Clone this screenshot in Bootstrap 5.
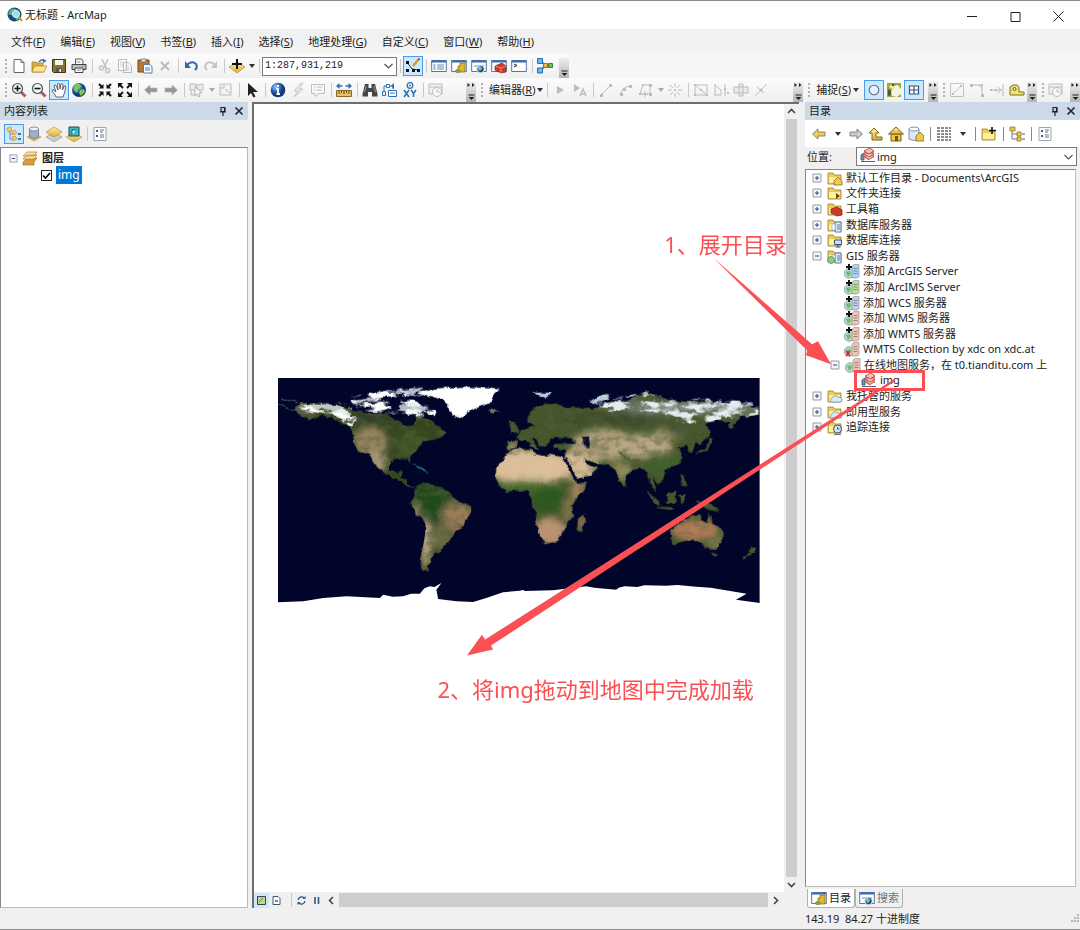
<!DOCTYPE html>
<html lang="zh-CN">
<head>
<meta charset="utf-8">
<meta name="viewport" content="width=device-width, initial-scale=1">
<title>无标题 - ArcMap</title>
<link href="https://cdn.jsdelivr.net/npm/bootstrap@5.3.0/dist/css/bootstrap.min.css" rel="stylesheet">
<style>
body{font-family:"Noto Sans","Noto Sans CJK SC",sans-serif;font-size:11px;line-height:16px;color:#222;background:#f0f0f0}
button{font:inherit;color:inherit;background:none;border:0;padding:0}
.app{min-height:100vh;border-top:1px solid #8c8c8c;border-bottom:1px solid #8c8c8c}
.titlebar{height:28px;background:#fff;padding-left:7px;gap:2px}
.winbtn{width:43px;height:28px}
.menubar{height:25px;background:linear-gradient(#f0f0f0,#f4f4f4);gap:15px;padding-left:11px}
.menubar a{color:#222;text-decoration:none}
.toolrow{height:24px;background:#f6f6f6}
.toolbar{height:24px;background:linear-gradient(#fcfcfc,#f0f0f0)}
.tb{flex:none;width:20px;height:20px;display:flex;align-items:center;justify-content:center}
.tb svg,.ic{width:16px;height:16px;flex:none;display:block}
.tb.on{background:#cce8ff;border:1px solid #4a9be8}
.tb.off svg{filter:grayscale(1);opacity:.45}
.grip{flex:none;width:4px;height:14px;background:radial-gradient(circle at 1px 1px,#b4b4b4 1px,transparent 1px) 0 0/4px 4px;margin-left:5px}
.sep{flex:none;width:6px;height:14px;background:linear-gradient(#c8c8c8,#c8c8c8) center/1px 100% no-repeat}
.catalog .sep{width:8px;background-image:linear-gradient(#888,#888)}
.dd{flex:none;width:9px;height:20px;display:flex;align-items:center;justify-content:center}
.dd::before{content:"";border:3px solid transparent;border-top:4px solid #333;border-bottom:0}
.dd.off::before{border-top-color:#aaa}
.more{flex:none;width:10px;height:20px;align-self:flex-end;background:linear-gradient(#eee,#b4b4b4);display:flex;align-items:flex-end}
.more svg{width:10px;height:20px}
.combo{appearance:none;border:1px solid #7a7a7a;border-radius:0;background:#fff;color:#222;height:19px;padding:0 16px 0 2px}
.combo.loc{padding-left:20px}
.scale-box{width:135px;font:10px/16px "Liberation Mono",monospace}
.comboarrow{position:absolute;right:4px;top:50%;width:9px;height:6px;margin-top:-3px;pointer-events:none}
.workarea{gap:4px}
.toc{width:248px}
.catalog{width:275px}
.panehead{height:18px;background:#cbd9e8;padding:0 3px 0 4px}
.panetools{height:27px}
.locrow{padding:0 3px 3px 2px}
.sunk{background:#fff;border:1px solid #828790;border-right-color:#bbb;border-bottom-color:#bbb}
.toc .sunk{padding-top:2px}
.sel{background:#0078d7;color:#fff;font-size:12px;line-height:18px;padding:0 2px}
.toc input{width:11px;height:11px;margin:0;appearance:none;border:1px solid #222;background:#fff url("data:image/svg+xml,%3Csvg xmlns='http://www.w3.org/2000/svg' viewBox='0 0 9 9'%3E%3Cpath d='M1 4.5 3.5 7 8 2' fill='none' stroke='%23000' stroke-width='1.6'/%3E%3C/svg%3E")}
.mapframe{border-left:2px solid #6e6e6e;border-top:2px solid #6e6e6e;min-width:0;margin-right:2px}
.mapview{background:#fff;min-width:0}
.world{width:91%}
.vscroll{width:15px;background:#f0f0f0}
.hscroll{height:16px}
.hscroll .thumb{height:14px}
.datav{background:#cce8ff}
.thumb{background:#cdcdcd}
.arrowbtn{width:15px;height:15px;display:flex;align-items:center;justify-content:center}
.arrowbtn svg{width:9px;height:9px}
.tree{list-style:none;margin:0;padding:0;height:265px;display:grid;grid-auto-rows:1fr}
.tree li{display:flex;align-items:center;white-space:nowrap;gap:3px;padding-left:6px;min-height:0}
.tree li>svg:first-child{width:10px;height:10px;margin-right:2px;flex:none}
.tree .d2{padding-left:38px}
.tree .d2x{padding-left:24px}
.tree .d3{padding-left:55px}
.pick{position:relative}
.pick::after{content:"";position:absolute;left:48px;width:71px;top:-3px;bottom:-3px;border:3px solid #fb4f54}
.tab{height:19px;border:1px solid #b0b0b0;border-top:0;border-radius:0 0 3px 3px;padding:0 3px;gap:2px}
.tab.act{background:#fff}
.tabs{padding:2px 0 0 2px}
.status{height:21px}
.marks{position:absolute;inset:0;width:100%;height:100%;pointer-events:none}
.note{position:absolute;color:#fb4f54;font-size:22px;line-height:30px;white-space:nowrap;pointer-events:none}
.note1{left:61.5%;top:24.6%}
.note2{left:40.5%;top:72.5%}
</style>
</head>
<body>
<svg class="position-absolute" width="0" height="0" aria-hidden="true">
<defs>
<linearGradient id="gy" x2="0" y2="1"><stop stop-color="#fff0a0"/><stop offset="1" stop-color="#dcae35"/></linearGradient>
<radialGradient id="gb" cx=".35" cy=".3"><stop stop-color="#9fd4ff"/><stop offset=".6" stop-color="#2b6cc4"/><stop offset="1" stop-color="#14397a"/></radialGradient>
</defs>
<symbol id="app" viewBox="0 0 16 16"><circle cx="7.5" cy="7.5" r="7" fill="#174f70"/><path d="M3 3q4-3 7 0l-2 4-4 1-3-1zM8 10l4-2 1 2-3 4z" fill="#5bb58b"/><circle cx="9" cy="7" r="3.6" fill="#9bdcee" stroke="#d9f2fa"/><path d="M11.5 10l3.5 4" stroke="#c79a35" stroke-width="2"/></symbol>
<symbol id="new" viewBox="0 0 16 16"><path d="M3 1.5h7l3 3v10H3z" fill="#fff" stroke="#666"/><path d="M10 1.5v3h3" fill="#ddd" stroke="#666"/></symbol>
<symbol id="open" viewBox="0 0 16 16"><path d="M1 4h4l1 1h6v9H1z" fill="#d8ae3c" stroke="#9b7824" stroke-width=".7"/><path d="M3.500 8H16l-3 6H1z" fill="#ffe58a" stroke="#a88328" stroke-width=".7"/><path d="M8 4q2-3 5-1.500" fill="none" stroke="#2a6cb5" stroke-width="1.300"/><path d="M12 .5l3.500 2.500-3.500 2z" fill="#2a6cb5"/></symbol>
<symbol id="save" viewBox="0 0 16 16"><path d="M1.500 1.500h13v13h-12l-1-1z" fill="#8c7428" stroke="#3c351f"/><path d="M4 2h8v5H4z" fill="#f4f4f4"/><path d="M5 10h6v4H5z" fill="#555"/><path d="M8.500 11h1.500v3H8.500z" fill="#fff"/></symbol>
<symbol id="print" viewBox="0 0 16 16"><path d="M4.500 1h6l1.500 2v4h-7.500z" fill="#fff" stroke="#555"/><path d="M1 6.500h14v5H1z" fill="#bfbfbf" stroke="#444"/><path d="M4 10h8v4.500H4z" fill="#fff" stroke="#444"/><path d="M11 8h2" stroke="#d9a520" stroke-width="1.500"/><path d="M5.500 4h4M6 12h4" stroke="#888"/></symbol>
<symbol id="cut" viewBox="0 0 16 16"><path d="M5 1l4 9M11 1L7 10" stroke="#888" stroke-width="1.600"/><circle cx="4.500" cy="10" r="2" fill="none" stroke="#888" stroke-width="1.500"/><circle cx="10.500" cy="12.500" r="2" fill="none" stroke="#888" stroke-width="1.500"/></symbol>
<symbol id="copy" viewBox="0 0 16 16"><path d="M1.500 1.500h8v11h-8zM6.500 4.500h5l3 3v7h-8z" fill="#fff" stroke="#777"/><path d="M8 8h4M8 10h5M8 12h5M3 4h3M3 6h3M3 8h3" stroke="#888" stroke-width=".8"/></symbol>
<symbol id="paste" viewBox="0 0 16 16"><path d="M1 2h11v12H1z" fill="#b67a30" stroke="#70491a"/><path d="M4 1h5v3H4z" fill="#ddd" stroke="#666" stroke-width=".7"/><path d="M6.500 6.500h6l2.500 2v6.500H6.500z" fill="#fff" stroke="#4a7fb8"/><path d="M8 10h5M8 12h5" stroke="#4a7fb8"/></symbol>
<symbol id="del" viewBox="0 0 16 16"><path d="M4 4l8 8M12 4l-8 8" stroke="#777" stroke-width="2"/></symbol>
<symbol id="undo" viewBox="0 0 16 16"><path d="M4 7q5-5 9-1 2 3-1 6" fill="none" stroke="#3565a8" stroke-width="2"/><path d="M2 3v7h6z" fill="#3565a8"/></symbol>
<symbol id="redo" viewBox="0 0 16 16"><path d="M12 7Q7 2 3 6q-2 3 1 6" fill="none" stroke="#888" stroke-width="2"/><path d="M14 3v7H8z" fill="#888"/></symbol>
<symbol id="addd" viewBox="0 0 16 16"><path d="M0 9l8-5 8 5-8 6z" fill="url(#gy)" stroke="#b58a3a" stroke-width=".7"/><path d="M8 1v10M3 6h10" stroke="#111" stroke-width="2"/></symbol>
<symbol id="edit" viewBox="0 0 16 16"><path d="M2 4l5 7 7 1" fill="none" stroke="#333" stroke-width="1"/><path d="M1 3h3v3H1zM1 11h3v3H1zM7 11h3v3H7zM12 11h3v3h-3z" fill="#111"/><path d="M8 8l5-6" stroke="#d49a26" stroke-width="2.500"/><path d="M13 2l1.500-1.500" stroke="#b33" stroke-width="2"/></symbol>
<symbol id="win" viewBox="0 0 16 16"><path d="M.7 2.500h14.600v11H.7z" fill="#fff" stroke="#56759e"/><path d="M.7 2.500h14.600v2H.7z" fill="#3f6bb0"/></symbol>
<symbol id="toc" viewBox="0 0 16 16"><use href="#win"/><path d="M2.500 7h2M2.500 9h2M2.500 11h2" stroke="#2d69b5" stroke-width="1.200"/><path d="M6 7h7M6 9h7M6 11h7" stroke="#5e8cc0"/></symbol>
<symbol id="cat" viewBox="0 0 16 16"><use href="#win"/><path d="M9 5h5v9H7V8h2z" fill="#e0b82c" stroke="#7a6515" stroke-width=".7"/><ellipse cx="7" cy="13" rx="3" ry="2" fill="#83a34b"/></symbol>
<symbol id="srch" viewBox="0 0 16 16"><use href="#win"/><path d="M3 7h10v2H3z" fill="#aac6e5"/><circle cx="9.500" cy="11" r="3.700" fill="url(#gb)" stroke="#ddd"/><path d="M7 11l3-2 1 2-2 2z" fill="#7bd078"/></symbol>
<symbol id="tbx" viewBox="0 0 16 16"><use href="#win"/><path d="M4 8l7-3 4 3v6l-5 1-6-3z" fill="#cc3a2d" stroke="#7e1c16" stroke-width=".7"/><path d="M4 8l6 2 5-2M10 10v5" stroke="#f28b7c" fill="none"/></symbol>
<symbol id="py" viewBox="0 0 16 16"><use href="#win"/><path d="M3 6l3 1.500L3 9" fill="none" stroke="#222"/></symbol>
<symbol id="model" viewBox="0 0 16 16"><path d="M4 3l4 4h4M4 12l4-4" fill="none" stroke="#333" stroke-width="1.300"/><path d="M.5.500h5v5h-5zM.5 10h5v5h-5z" fill="#6eb5f0" stroke="#2b6fa9"/><path d="M6.500 5.500h4v4h-4z" fill="#f3b04c" stroke="#a86a18"/><path d="M11.500 5.500h4v4h-4z" fill="#67c057" stroke="#39822b"/></symbol>
<symbol id="lens" viewBox="0 0 16 16"><path d="M10 10l4.500 4.500" stroke="#9a665d" stroke-width="3"/><circle cx="6.500" cy="6.500" r="5" fill="#f4f7fa" stroke="#555" stroke-width="1.200"/></symbol>
<symbol id="zin" viewBox="0 0 16 16"><use href="#lens"/><path d="M6.500 3.500v6M3.500 6.500h6" stroke="#111" stroke-width="1.600"/></symbol>
<symbol id="zout" viewBox="0 0 16 16"><use href="#lens"/><path d="M3.500 6.500h6" stroke="#111" stroke-width="1.600"/></symbol>
<symbol id="hand" viewBox="0 0 16 16"><path d="M5 15Q4 12 1 9q0-2 2-1l2 2L3 4q.5-2 2-.5L7 8 6.500 2q1-2 2 0L9 7l1-5q1.500-1 2 .5L11.500 8l1.700-4q1.800-.5 1.500 1-.5 5-2.700 10z" fill="#fff" stroke="#444" stroke-width=".8"/></symbol>
<symbol id="globe" viewBox="0 0 16 16"><circle cx="8" cy="8" r="7" fill="url(#gb)"/><path d="M3 4q3-3 6-2l1 3-3 2-1 4-3-3zM9 8l4-1 1 3-4 4-2-3z" fill="#82c457"/></symbol>
<symbol id="fin" viewBox="0 0 16 16"><path d="M2 2l3 3M14 2l-3 3M2 14l3-3M14 14l-3-3" stroke="#111" stroke-width="2"/><path d="M6.500 2v4.500H2zM9.500 2v4.500H14zM6.500 14V9.500H2zM9.500 14V9.500H14z" fill="#111"/></symbol>
<symbol id="fout" viewBox="0 0 16 16"><path d="M2 2l4 4M14 2l-4 4M2 14l4-4M14 14l-4-4" stroke="#111" stroke-width="1.800"/><path d="M1 1h5L1 6zM15 1h-5l5 5zM1 15h5l-5-5zM15 15h-5l5-5z" fill="#111"/></symbol>
<symbol id="prev" viewBox="0 0 16 16"><path d="M1.500 8L7 3v3h7v4H7v3z" fill="currentColor" stroke="#6d6d6d" stroke-width=".8"/></symbol>
<symbol id="next" viewBox="0 0 16 16"><path d="M14.500 8L9 3v3H2v4h7v3z" fill="currentColor" stroke="#6d6d6d" stroke-width=".8"/></symbol>
<symbol id="selp" viewBox="0 0 16 16"><path d="M1 2h6v6H1zM8 3l6-1v6H8zM2 8v5h5" fill="#ddd" stroke="#777"/><path d="M6 5v9l2-2 2 3 1-1-1-3h3z" fill="#fff" stroke="#666"/></symbol>
<symbol id="clr" viewBox="0 0 16 16"><path d="M2 2h11v11H2z" fill="#eee" stroke="#777"/><path d="M2 6h4V3M7 7l5 4" stroke="#777" fill="none"/></symbol>
<symbol id="ptr" viewBox="0 0 16 16"><path d="M4 1v13l3-3 2.500 4.500 2-1L9 10h5z" fill="#222"/></symbol>
<symbol id="info" viewBox="0 0 16 16"><circle cx="8" cy="8" r="7.300" fill="url(#gb)"/><path d="M8 3v2M6.500 7H8v5M6.500 12h3.500" stroke="#fff" stroke-width="1.800" fill="none"/></symbol>
<symbol id="bolt" viewBox="0 0 16 16"><path d="M11 1L4 9h4l-4 6 9-8H9l4-6z" fill="#ddd" stroke="#777" stroke-width=".8"/></symbol>
<symbol id="pop" viewBox="0 0 16 16"><path d="M1.500 2.500h13v9H9l-4 3v-3H1.500z" fill="#fff" stroke="#777"/><path d="M4 5h1.500M4 8h1.500M7 5h5M7 8h5" stroke="#777"/></symbol>
<symbol id="meas" viewBox="0 0 16 16"><path d="M.5 8.500h15v6H.5z" fill="#eac06b" stroke="#8c662c"/><path d="M3 9v3M5.500 9v2M8 9v3M10.500 9v2M13 9v3" stroke="#64451b"/><path d="M2 4h4.500M9.500 4H14" stroke="#2d6fb8" stroke-width="1.500"/><path d="M0 4l3.500-3v6zM16 4l-3.500-3v6z" fill="#2d6fb8"/></symbol>
<symbol id="bino" viewBox="0 0 16 16"><path d="M3 2h3.500v4h3V2H13l2.500 10v2.500H10V10H6v4.500H.5V12z" fill="#454545"/><path d="M2.500 10L4 4M13.500 10L12 4" stroke="#999"/></symbol>
<symbol id="route" viewBox="0 0 16 16"><path d="M2 10V4h9v3" stroke="#2770b6" fill="none"/><path d="M.5 9.500h3v4h-3zM4.500 2.500h3v3h-3z" fill="#fff" stroke="#2770b6"/><path d="M9 4l3-3v6z" fill="#2770b6"/><path d="M6.500 8.500h8v6h-8z" fill="#fff" stroke="#2770b6"/><path d="M8 11h5" stroke="#2770b6"/></symbol>
<symbol id="xy" viewBox="0 0 16 16"><circle cx="8" cy="3.500" r="2.800" fill="#fff" stroke="#2770b6" stroke-width="1.300"/><circle cx="8" cy="3.500" r="1" fill="#2770b6"/><path d="M2 8l5 7M7 8l-5 7M9 8l2.500 3.500L14 8M11.500 11v4" fill="none" stroke="#2770b6" stroke-width="1.500"/></symbol>
<symbol id="time" viewBox="0 0 16 16"><path d="M1 2h13v10H1zM1 5h13" fill="#eee" stroke="#777"/><circle cx="9" cy="10" r="4.500" fill="#fff" stroke="#777"/><path d="M9 7v3h3" stroke="#777" fill="none"/></symbol>
<symbol id="play" viewBox="0 0 16 16"><path d="M5 4l7 4-7 4z" fill="#777"/></symbol>
<symbol id="playa" viewBox="0 0 16 16"><path d="M2 2l6 4-6 4z" fill="#777"/><path d="M8 14l3-7 3 7M9 12h4" stroke="#777" fill="none" stroke-width="1.300"/></symbol>
<symbol id="ln" viewBox="0 0 16 16"><path d="M3 13L13 3" stroke="#777"/><path d="M2 12h3v3H2zM11 2h3v3h-3z" fill="#777"/></symbol>
<symbol id="arc" viewBox="0 0 16 16"><path d="M3 13Q3 5 12 4" fill="none" stroke="#777"/><path d="M2 11h3v3H2zM5 6h3v3H5zM11 3h3v3h-3z" fill="#777"/></symbol>
<symbol id="trc" viewBox="0 0 16 16"><path d="M2 12L5 3h7v9H2" fill="none" stroke="#777"/><path d="M11 2h3v3h-3zM11 11h3v3h-3zM4 2h2v2H4zM1 11h2v2H1z" fill="#777"/><path d="M7 9v6M4 12h6" stroke="#777"/></symbol>
<symbol id="fillet" viewBox="0 0 16 16"><path d="M2 3h5q6 0 6 6v5M9 3h4v4" fill="none" stroke="#777"/><path d="M1 2h3v3H1zM12 12h3v3h-3zM12 2h2v2h-2z" fill="#777"/></symbol>
<symbol id="extend" viewBox="0 0 16 16"><path d="M1 8h12M14 2v12M9 5l3 3-3 3" fill="none" stroke="#777"/><path d="M1 7h2v2H1zM6 7h2v2H6z" fill="#777"/></symbol>
<symbol id="star" viewBox="0 0 16 16"><path d="M8 1v4M8 11v4M1 8h4M11 8h4M3 3l3 3M13 3l-3 3M3 13l3-3M13 13l-3-3" stroke="#777"/><path d="M7 7h2v2H7z" fill="#777"/></symbol>
<symbol id="ver" viewBox="0 0 16 16"><path d="M2 3v10h12L2 3h12v10" fill="none" stroke="#777"/><path d="M1 2h2v2H1zM1 12h2v2H1zM13 12h2v2h-2zM7 7h2v2H7z" fill="#777"/></symbol>
<symbol id="rsh" viewBox="0 0 16 16"><path d="M2 2v12M2 3l6 5v5H2M12 2v12" fill="none" stroke="#777"/><path d="M11 6h2v2h-2zM14 10h2v2h-2z" fill="#777"/></symbol>
<symbol id="cutp" viewBox="0 0 16 16"><path d="M1 5h14v6H1zM6 2h4v12H6z" fill="#ddd" stroke="#777"/></symbol>
<symbol id="spl" viewBox="0 0 16 16"><path d="M2 14L14 2M4 5l7 6" stroke="#777"/><circle cx="8" cy="8" r="1.500" fill="#777"/></symbol>
<symbol id="circ" viewBox="0 0 16 16"><circle cx="8" cy="8" r="4.800" fill="#e6f3ff" stroke="#51708e" stroke-width="1.100"/></symbol>
<symbol id="snapp" viewBox="0 0 16 16"><path d="M1 1h14v14H1z" fill="#98a648"/><path d="M8 4l4-1 3 4v5l-4 3-5-1-1-4z" fill="#f5f3d9"/><path d="M3 4l4-2 2 2-2 3-3-1z" fill="#f1e68c"/><path d="M2 7l3 2v4l-3 1zM6 2h2v2H6z" fill="#4a5a28"/></symbol>
<symbol id="grid" viewBox="0 0 16 16"><path d="M3.500 4h9v8h-9zM8 4v8M3.500 8h9" fill="#fff" stroke="#355878" stroke-width="1.200"/></symbol>
<symbol id="topo" viewBox="0 0 16 16"><path d="M1.500 1.500h13v13h-13zM4 12l8-8" fill="none" stroke="#888"/><path d="M3 11h2v2H3zM11 3h2v2h-2z" fill="#777"/></symbol>
<symbol id="tape" viewBox="0 0 16 16"><path d="M1 10V5l3-2h4l2 2v5h5v3H1z" fill="#f1e56b" stroke="#74701f"/><circle cx="5.500" cy="7" r="1.500" fill="#fff" stroke="#555"/></symbol>
<symbol id="lsto" viewBox="0 0 16 16"><path d="M4 4v9h5M4 8h5" stroke="#888" fill="none"/><path d="M1 2l4-1 1 4-4 1zM6 6l3-2 2 3-3 2zM6 11l3-1 2 3-4 2z" fill="#f0c76a" stroke="#c08a2e" stroke-width=".6"/><path d="M12 8h3M12 13h3" stroke="#3b77b6" stroke-width="2"/></symbol>
<symbol id="lsts" viewBox="0 0 16 16"><path d="M1 11l7-4 7 4-7 4z" fill="url(#gy)" stroke="#b8862e" stroke-width=".6"/><path d="M3.500 3v8q4.500 3 9 0V3z" fill="#9fb0c4" stroke="#576a82" stroke-width=".7"/><ellipse cx="8" cy="3" rx="4.500" ry="2" fill="#eef4fa" stroke="#576a82" stroke-width=".7"/></symbol>
<symbol id="lstv" viewBox="0 0 16 16"><path d="M0 11l8-5 8 5-8 5z" fill="#ccc" stroke="#888" stroke-width=".6"/><path d="M0 6l8-5 8 5-8 5z" fill="url(#gy)" stroke="#b8862e" stroke-width=".6"/></symbol>
<symbol id="lstl" viewBox="0 0 16 16"><path d="M0 11l8-4 8 4-8 5z" fill="url(#gy)" stroke="#b8862e" stroke-width=".6"/><path d="M3 1h10v9H3z" fill="#35bdc9" stroke="#24464a"/><path d="M6 9V4h4" fill="#fff" stroke="#24464a"/></symbol>
<symbol id="opts" viewBox="0 0 16 16"><path d="M2 1.500h12v13H2z" fill="#fafcff" stroke="#9aa6b5"/><path d="M4 4h2v2H4zM4 9h2v2H4z" fill="#4a5d7c"/><path d="M8 4h4M8 6h3M8 9h4M8 11h4" stroke="#777"/></symbol>
<symbol id="layers" viewBox="0 0 16 16"><path d="M1 12l4-4h10l-3 4v3H1z" fill="#d99e3c" stroke="#a16a1c" stroke-width=".6"/><path d="M1 9l4-4h10l-3 4zM1 6l4-4h10l-3 4z" fill="#ffe3a0" stroke="#b67a28" stroke-width=".7"/></symbol>
<symbol id="up" viewBox="0 0 16 16"><path d="M6 2l5 5H8v4h6v3H4V7H1z" fill="url(#gy)" stroke="#806514"/></symbol>
<symbol id="home" viewBox="0 0 16 16"><path d="M3 8h10v7H3z" fill="#edc64a" stroke="#7d6216"/><path d="M.500 8L8 1l7.500 7z" fill="url(#gy)" stroke="#7d6216"/><path d="M7 10h3v5H7z" fill="#725613"/></symbol>
<symbol id="hgdb" viewBox="0 0 16 16"><path d="M1 3v10q5 3 10 0V3z" fill="#dbe8f5" stroke="#7595b6"/><ellipse cx="6" cy="3" rx="5" ry="2" fill="#fff" stroke="#7595b6"/><path d="M8 10l4-4 4 4v5H8z" fill="#f0c648" stroke="#846718" stroke-width=".8"/></symbol>
<symbol id="tbl" viewBox="0 0 16 16"><path d="M1 2h14M1 5h14M1 8h14M1 11h14M1 14h14" stroke="#666" stroke-width="1.500" stroke-dasharray="3 1"/></symbol>
<symbol id="fold" viewBox="0 0 16 16"><path d="M1 3h5l1.500 2H14v9H1z" fill="#e9cb61" stroke="#9c8227" stroke-width=".8"/><path d="M2 7h11v6H2z" fill="#fff09e"/></symbol>
<symbol id="conf" viewBox="0 0 16 16"><use href="#fold"/><path d="M11 1v7M8 4.500h7" stroke="#111" stroke-width="1.600"/></symbol>
<symbol id="treei" viewBox="0 0 16 16"><path d="M3 4v9h8M3 8h8" fill="none" stroke="#777"/><path d="M1 1h5v4H1zM8 6h4v4H8zM8 11h4v4H8z" fill="#edc74b" stroke="#94751b" stroke-width=".8"/><path d="M13 8h3M13 13h3" stroke="#555"/></symbol>
<symbol id="f1" viewBox="0 0 16 16"><use href="#fold"/><path d="M7 11l4-4 4 4v4H7z" fill="#f1ca50" stroke="#85691a" stroke-width=".8"/></symbol>
<symbol id="f2" viewBox="0 0 16 16"><use href="#fold"/><path d="M9 8l4 3-4 3z" fill="#5b4a17"/></symbol>
<symbol id="f3" viewBox="0 0 16 16"><use href="#fold"/><path d="M4 8l6-2 5 3v5l-5 1-6-3z" fill="#cc3a2d" stroke="#821e18" stroke-width=".7"/></symbol>
<symbol id="f4" viewBox="0 0 16 16"><use href="#fold"/><path d="M8 5h6v10H8z" fill="#dcebf8" stroke="#5a7fa6"/><path d="M10 8h3M10 10h3M10 12h3" stroke="#5a7fa6"/><path d="M5 7h3v6H5z" fill="#fff" stroke="#86a0ba" stroke-width=".6"/></symbol>
<symbol id="f5" viewBox="0 0 16 16"><use href="#fold"/><path d="M7.500 8h7v4.500h-7zM11 13v2M8.500 15h5" fill="#cfe0f5" stroke="#384f70"/></symbol>
<symbol id="f6" viewBox="0 0 16 16"><use href="#f4"/><circle cx="4" cy="12" r="3.500" fill="#8fc98c" stroke="#4e8a61" stroke-width=".7"/></symbol>
<symbol id="f7" viewBox="0 0 16 16"><use href="#fold"/><path d="M4 14q-2-3 1-4 2-4 6-1 4 0 4 3 0 2-2 2z" fill="#d8eafa" stroke="#6c96bf" stroke-width=".8"/></symbol>
<symbol id="f8" viewBox="0 0 16 16"><use href="#fold"/><circle cx="10.500" cy="10" r="4" fill="#d5e5f6" stroke="#44546d"/><path d="M10.500 8v2h2M7 15.300h7" stroke="#44546d" fill="none"/></symbol>
<symbol id="srv" viewBox="0 0 16 16"><circle cx="5" cy="10.500" r="4.800" fill="#b4d8cf" stroke="#789b91" stroke-width=".7"/><path d="M2 9l4-1 1 3-3 3z" fill="#7db56d"/><path d="M8 3l2-1.500h5v12L13.500 15H8z" fill="currentColor" stroke="#8b8b8b" stroke-width=".6"/><path d="M9.500 5.500h4M9.500 8h4M9.500 10.500h4" stroke="#6b7886" stroke-width=".8"/></symbol>
<symbol id="srva" viewBox="0 0 16 16"><use href="#srv"/><path d="M5 1v6M2 4h6" stroke="#111" stroke-width="2"/></symbol>
<symbol id="srvx" viewBox="0 0 16 16"><use href="#srv"/><path d="M2 10l4 5M6 10l-4 5" stroke="#d3262b" stroke-width="1.600"/></symbol>
<symbol id="wms" viewBox="0 0 16 16"><path d="M1 8l3-2v7H1zM1 14.500h14" fill="#7890a5" stroke="#4c657b"/><path d="M4 10l4 3 6-3V4L10 1 4 4z" fill="#d9796b"/><path d="M4 4l6-3 4 3-5 3zM4 7l5 3 5-3M4 9.500l5 3 5-3" fill="#f5bfb4" stroke="#aa473b" stroke-width=".8"/></symbol>
<symbol id="plus" viewBox="0 0 10 10"><path d="M1 1h8v8H1z" fill="#f4f6fa" stroke="#979ba5"/><path d="M5 3v4M3 5h4" stroke="#31487d"/></symbol>
<symbol id="minus" viewBox="0 0 10 10"><path d="M1 1h8v8H1z" fill="#f4f6fa" stroke="#979ba5"/><path d="M3 5h4" stroke="#31487d"/></symbol>
<symbol id="ovf" viewBox="0 0 10 20"><path d="M2.500 13h6" stroke="#222"/><path d="M2.500 15h6l-3 3z" fill="#222"/></symbol>
<symbol id="ovf2" viewBox="0 0 10 20"><path d="M1.500 1l2.500 2-2.500 2zM6 1l2.500 2L6 5z" fill="#222"/><use href="#ovf"/></symbol>
<symbol id="down" viewBox="0 0 9 6"><path d="M.5 1l4 4 4-4" fill="none" stroke="#555" stroke-width="1.200"/></symbol>
<symbol id="pin" viewBox="0 0 12 12"><path d="M4 2.500h4v4H4zM3 7h6M6 7v4M7.500 2.500v4" fill="none" stroke="#222" stroke-width="1.200"/></symbol>
<symbol id="x" viewBox="0 0 12 12"><path d="M2.500 2.500l7 7M9.500 2.500l-7 7" stroke="#222" stroke-width="1.600"/></symbol>
</svg>

<div class="app d-flex flex-column position-relative">
<header>
 <div class="titlebar d-flex align-items-center">
  <svg class="ic"><use href="#app"/></svg><span>无标题 - ArcMap</span>
  <div class="ms-auto d-flex">
   <button class="winbtn" aria-label="最小化"><svg width="11" height="11"><path d="M0 5.500h10" stroke="#222"/></svg></button>
   <button class="winbtn" aria-label="最大化"><svg width="11" height="11"><path d="M1 1.500h9v9H1z" fill="none" stroke="#222"/></svg></button>
   <button class="winbtn" aria-label="关闭"><svg width="11" height="11"><path d="M.5.500l10 10M10.500.500l-10 10" stroke="#222"/></svg></button>
  </div>
 </div>
 <nav class="menubar d-flex align-items-center">
  <a href="#">文件(<u>F</u>)</a><a href="#">编辑(<u>E</u>)</a><a href="#">视图(<u>V</u>)</a><a href="#">书签(<u>B</u>)</a><a href="#">插入(<u>I</u>)</a><a href="#">选择(<u>S</u>)</a><a href="#">地理处理(<u>G</u>)</a><a href="#">自定义(<u>C</u>)</a><a href="#">窗口(<u>W</u>)</a><a href="#">帮助(<u>H</u>)</a>
 </nav>
 <div class="toolrow d-flex">
  <div class="toolbar d-flex align-items-center">
   <span class="grip"></span>
   <button class="tb" aria-label="新建"><svg><use href="#new"/></svg></button><button class="tb" aria-label="打开"><svg><use href="#open"/></svg></button><button class="tb" aria-label="保存"><svg><use href="#save"/></svg></button><button class="tb" aria-label="打印"><svg><use href="#print"/></svg></button>
   <span class="sep"></span>
   <button class="tb off" aria-label="剪切"><svg><use href="#cut"/></svg></button><button class="tb off" aria-label="复制"><svg><use href="#copy"/></svg></button><button class="tb" aria-label="粘贴"><svg><use href="#paste"/></svg></button><button class="tb off" aria-label="删除"><svg><use href="#del"/></svg></button>
   <span class="sep"></span>
   <button class="tb" aria-label="撤消"><svg><use href="#undo"/></svg></button><button class="tb off" aria-label="恢复"><svg><use href="#redo"/></svg></button>
   <span class="sep"></span>
   <button class="tb" aria-label="添加数据"><svg><use href="#addd"/></svg></button><button class="dd" aria-label="更多数据"></button>
   <span class="sep"></span>
   <div class="position-relative"><select class="combo scale-box d-block" aria-label="比例尺"><option>1:287,931,219</option></select><svg class="comboarrow"><use href="#down"/></svg></div>
   <span class="sep"></span>
   <button class="tb on" aria-label="编辑器工具条"><svg><use href="#edit"/></svg></button>
   <span class="sep"></span>
   <button class="tb" aria-label="内容列表"><svg><use href="#toc"/></svg></button><button class="tb" aria-label="目录"><svg><use href="#cat"/></svg></button><button class="tb" aria-label="搜索"><svg><use href="#srch"/></svg></button><button class="tb" aria-label="工具箱"><svg><use href="#tbx"/></svg></button><button class="tb" aria-label="Python"><svg><use href="#py"/></svg></button>
   <span class="sep"></span>
   <button class="tb me-1" aria-label="模型构建器"><svg><use href="#model"/></svg></button>
   <button class="more" aria-label="选项"><svg><use href="#ovf"/></svg></button>
  </div>
 </div>
 <div class="toolrow d-flex overflow-hidden">
  <div class="toolbar d-flex align-items-center">
   <span class="grip"></span>
   <button class="tb" aria-label="放大"><svg><use href="#zin"/></svg></button><button class="tb" aria-label="缩小"><svg><use href="#zout"/></svg></button><button class="tb on" aria-label="平移"><svg><use href="#hand"/></svg></button><button class="tb" aria-label="全图"><svg><use href="#globe"/></svg></button>
   <span class="sep"></span>
   <button class="tb" aria-label="固定比例放大"><svg><use href="#fin"/></svg></button><button class="tb" aria-label="固定比例缩小"><svg><use href="#fout"/></svg></button>
   <span class="sep"></span>
   <button class="tb off" aria-label="上一视图"><svg><use href="#prev"/></svg></button><button class="tb off" aria-label="下一视图"><svg><use href="#next"/></svg></button>
   <span class="sep"></span>
   <button class="tb off" aria-label="选择要素"><svg><use href="#selp"/></svg></button><button class="dd off" aria-label="选择方式"></button><button class="tb off" aria-label="清除选择"><svg><use href="#clr"/></svg></button>
   <span class="sep"></span>
   <button class="tb" aria-label="选择元素"><svg><use href="#ptr"/></svg></button>
   <span class="sep"></span>
   <button class="tb" aria-label="识别"><svg><use href="#info"/></svg></button><button class="tb off" aria-label="超链接"><svg><use href="#bolt"/></svg></button><button class="tb off" aria-label="弹出窗口"><svg><use href="#pop"/></svg></button>
   <span class="sep"></span>
   <button class="tb" aria-label="测量"><svg><use href="#meas"/></svg></button>
   <span class="sep"></span>
   <button class="tb" aria-label="查找"><svg><use href="#bino"/></svg></button><button class="tb" aria-label="查找路径"><svg><use href="#route"/></svg></button><button class="tb" aria-label="转到 XY"><svg><use href="#xy"/></svg></button>
   <span class="sep"></span>
   <button class="tb off me-3" aria-label="时间滑块"><svg><use href="#time"/></svg></button>
   <button class="more ms-1" aria-label="选项"><svg><use href="#ovf2"/></svg></button>
  </div>
  <div class="toolbar d-flex align-items-center flex-grow-1">
   <span class="grip"></span>
   <button class="ms-1">编辑器(<u>R</u>)</button><span class="dd"></span><span class="sep"></span>
   <button class="tb off" aria-label="编辑工具"><svg><use href="#play"/></svg></button><button class="tb off" aria-label="编辑注记"><svg><use href="#playa"/></svg></button>
   <span class="sep"></span>
   <button class="tb off" aria-label="直线段"><svg><use href="#ln"/></svg></button><button class="tb off" aria-label="弧段"><svg><use href="#arc"/></svg></button><button class="tb off" aria-label="追踪"><svg><use href="#trc"/></svg></button><button class="dd off" aria-label="构造方式"></button><button class="tb off" aria-label="点"><svg><use href="#star"/></svg></button>
   <span class="sep"></span>
   <button class="tb off" aria-label="编辑折点"><svg><use href="#ver"/></svg></button><button class="tb off" aria-label="整形"><svg><use href="#rsh"/></svg></button><button class="tb off" aria-label="裁剪面"><svg><use href="#cutp"/></svg></button><button class="tb off" aria-label="分割"><svg><use href="#spl"/></svg></button>
   <button class="more ms-auto" aria-label="选项"><svg><use href="#ovf2"/></svg></button>
  </div>
  <div class="toolbar d-flex align-items-center">
   <span class="grip"></span>
   <button class="ms-1">捕捉(<u>S</u>)</button><span class="dd me-1"></span>
   <button class="tb on" aria-label="点捕捉"><svg><use href="#circ"/></svg></button><button class="tb" aria-label="端点捕捉"><svg><use href="#snapp"/></svg></button><button class="tb on" aria-label="折点捕捉"><svg><use href="#grid"/></svg></button>
   <button class="more ms-1" aria-label="选项"><svg><use href="#ovf2"/></svg></button>
  </div>
  <div class="toolbar d-flex align-items-center">
   <span class="grip"></span>
   <button class="tb off" aria-label="拓扑"><svg><use href="#topo"/></svg></button><button class="tb off" aria-label="圆角"><svg><use href="#fillet"/></svg></button><button class="tb off" aria-label="延伸"><svg><use href="#extend"/></svg></button><button class="tb" aria-label="测距"><svg><use href="#tape"/></svg></button>
   <button class="more" aria-label="选项"><svg><use href="#ovf2"/></svg></button>
  </div>
  <div class="toolbar d-flex align-items-center">
   <span class="grip"></span>
   <button class="tb off me-1" aria-label="历史"><svg><use href="#time"/></svg></button>
   <button class="more" aria-label="选项"><svg><use href="#ovf2"/></svg></button>
  </div>
 </div>
</header>

<main class="workarea d-flex flex-grow-1">
 <aside class="toc d-flex flex-column flex-shrink-0">
  <div class="panehead d-flex align-items-center"><span>内容列表</span>
   <button class="ms-auto" aria-label="固定"><svg class="d-block" width="12" height="12"><use href="#pin"/></svg></button><button class="ms-1" aria-label="关闭"><svg class="d-block" width="12" height="12"><use href="#x"/></svg></button></div>
  <div class="panetools d-flex align-items-center ps-1">
   <button class="tb on" aria-label="按绘制顺序"><svg><use href="#lsto"/></svg></button><button class="tb" aria-label="按源"><svg><use href="#lsts"/></svg></button><button class="tb" aria-label="按可见性"><svg><use href="#lstv"/></svg></button><button class="tb" aria-label="按选择"><svg><use href="#lstl"/></svg></button><span class="sep"></span><button class="tb" aria-label="选项"><svg><use href="#opts"/></svg></button>
  </div>
  <div class="sunk flex-grow-1">
   <div class="d-flex align-items-center ps-2 gap-1 fw-bold"><svg width="9" height="9"><use href="#minus"/></svg><svg class="ic"><use href="#layers"/></svg>图层</div>
   <div class="d-flex align-items-center ms-4 ps-3"><input type="checkbox" id="lyr" checked><label class="sel ms-1" for="lyr">img</label></div>
  </div>
 </aside>

 <section class="mapframe d-flex flex-column flex-grow-1">
  <div class="d-flex flex-grow-1">
   <div class="mapview flex-grow-1 d-flex align-items-center justify-content-center">
    <svg class="world" viewBox="0 0 1449 723" role="img" aria-label="世界影像地图">
     <defs>
      <filter id="rough" x="0" y="0" width="100%" height="100%"><feTurbulence type="fractalNoise" baseFrequency=".05" numOctaves="3" seed="4"/><feDisplacementMap in="SourceGraphic" scale="14" xChannelSelector="R" yChannelSelector="G"/></filter>
      <filter id="soft" x="-30%" y="-30%" width="160%" height="160%"><feGaussianBlur stdDeviation="9"/></filter>
      <filter id="mott" x="0" y="0" width="100%" height="100%"><feTurbulence type="fractalNoise" baseFrequency=".03 .05" numOctaves="4" seed="8"/><feColorMatrix values="0 0 0 0 .08  0 0 0 0 .12  0 0 0 0 .05  4 0 0 0 -1.7"/></filter>
      <filter id="snow" x="0" y="0" width="100%" height="100%"><feTurbulence type="fractalNoise" baseFrequency=".02 .05" numOctaves="4" seed="3" result="n"/><feColorMatrix in="n" values="0 0 0 0 1 0 0 0 0 1 0 0 0 0 1 7 0 0 0 -3.100"/><feComposite in="SourceGraphic" operator="in"/></filter>
      <clipPath id="ca">
       <path d="M78 112L95 100 130 100 165 104 210 108 245 118 300 132 350 130 375 150 400 165 430 165 440 135 480 150 500 165 530 188 510 205 480 208 455 220 440 240 420 262 424 284 412 267 385 265 362 275 358 298 378 308 395 300 400 310 390 322 410 332 420 350 440 352 425 357 400 340 370 324 340 310 315 285 300 255 265 245 253 222 250 195 245 180 215 158 185 142 150 140 120 150 95 140 78 125Z"/>
       <path d="M440 348L462 338 490 345 520 355 548 375 558 395 605 408 605 425 588 450 580 472 555 485 540 515 520 530 510 545 495 555 480 575 472 590 478 605 458 600 448 580 458 540 465 500 468 455 440 435 422 402 430 378Z"/>
      </clipPath>
      <clipPath id="cb">
       <path d="M-5 243L30 238 65 236 72 252 100 258 125 255 160 262 175 290 190 318 203 342 232 338 225 360 195 390 188 410 190 440 170 465 160 490 140 515 105 523 95 505 85 480 75 455 82 430 68 410 65 385 60 365 30 362-5 364-25 355-42 325-40 295-20 270Z"/>
       <path d="M205 450L225 432 226 455 215 487 202 482Z"/>
       <path d="M20 200L35 180 75 168 50 150 55 130 90 105 140 100 175 115 210 110 250 120 300 95 360 90 410 65 440 80 520 95 600 95 680 100 749 112 749 135 700 140 682 150 668 180 655 175 660 155 620 150 585 165 605 185 590 205 570 222 560 215 545 250 530 225 510 235 520 260 505 285 480 295 465 300 462 330 445 345 430 322 440 368 425 345 415 310 395 290 380 295 350 315 350 350 338 345 315 300 295 285 265 282 222 264 235 285 265 295 245 315 205 330 185 300 165 270 170 240 130 235 138 222 200 222 185 205 150 205 140 200 120 208 110 230 95 232 80 212 62 205 88 240 75 235 50 212 30 212Z"/>
       <path d="M-10 212L25 212 20 235-8 238ZM0 155L15 155 30 185 5 190ZM410 360L440 385 452 407 435 402ZM445 410L490 413 490 420 447 416ZM470 375L500 358 498 398 475 400ZM510 378L530 375 520 400 512 398ZM512 312L522 318 532 352 520 345ZM560 392L600 400 632 424 590 420ZM600 200L610 210 592 242 555 252 590 232ZM725 530L740 540 722 555 700 572 698 565 720 550Z"/>
       <path d="M482 480L510 460 540 440 575 435 575 450 592 460 600 430 612 460 640 485 640 510 620 540 600 540 575 520 555 510 520 515 490 525 485 505ZM605 550L622 550 615 560Z"/>
      </clipPath>
     </defs>
     <path d="M0 0h1447v676H0z" fill="#02052a"/>
     <g filter="url(#rough)">
      <g transform="translate(-24 -24)">
       <g clip-path="url(#ca)">
        <path d="M24 24h700v600H24z" fill="#35461f"/>
        <g filter="url(#soft)"><ellipse cx="300" cy="215" rx="55" ry="45" fill="#98845f"/><ellipse cx="325" cy="275" rx="28" ry="32" fill="#a59674"/><ellipse cx="420" cy="225" rx="45" ry="35" fill="#3e5524"/><ellipse cx="300" cy="145" rx="140" ry="14" fill="#343f2b"/><ellipse cx="110" cy="115" rx="40" ry="20" fill="#65654b"/><ellipse cx="485" cy="400" rx="60" ry="55" fill="#24491b"/><ellipse cx="565" cy="440" rx="50" ry="45" fill="#9c7c58"/><ellipse cx="515" cy="500" rx="35" ry="40" fill="#6c6a40"/><ellipse cx="468" cy="520" rx="16" ry="75" fill="#c5a688"/><ellipse cx="436" cy="428" rx="12" ry="30" fill="#a18b68"/></g>
        <rect x="24" y="24" width="700" height="600" filter="url(#mott)" opacity=".5"/>
       </g>
       <path d="M440 70L500 55 590 50 690 58 672 75 660 100 630 110 595 125 572 145 545 135 535 105 515 88 480 78Z" fill="#fff"/>
       <g filter="url(#snow)" fill="#fff"><path d="M245 80L350 62 460 52 475 70 430 90 500 125 490 150 440 140 400 132 300 125 245 105ZM70 100L230 100 265 140 245 175 190 135 120 125 80 130Z"/></g>
       <path d="M90 104L200 104 245 128 235 140 180 120 110 112ZM250 92L330 80 320 92 260 98ZM370 68L460 52 430 74ZM380 108L430 98 480 112 450 124 400 122Z" fill="#dfe8ee" opacity=".8"/>
       <path d="M24 104l30 12 30 10M30 92q20-5 50 5" stroke="#4d6577" stroke-width="3" fill="none"/>
       <path d="M425 283l25 8 30 18-25-8z" fill="#237e92"/><path d="M385 150q20 30 45 12l5-30-30 5z" fill="#05082b"/><path d="M655 118l35 4-20 8z" fill="#80816f"/>
      </g>
      <g transform="translate(696 -24)">
       <g clip-path="url(#cb)">
        <path d="M-60 24h820v600H-60z" fill="#44562a"/>
        <g filter="url(#soft)"><ellipse cx="60" cy="290" rx="135" ry="52" fill="#dabf9a"/><ellipse cx="210" cy="285" rx="55" ry="50" fill="#d8bb96"/><ellipse cx="50" cy="350" rx="115" ry="19" fill="#446a29"/><ellipse cx="120" cy="390" rx="50" ry="42" fill="#2f5921"/><ellipse cx="205" cy="365" rx="23" ry="26" fill="#b38967"/><ellipse cx="178" cy="420" rx="20" ry="40" fill="#7f754a"/><ellipse cx="120" cy="485" rx="50" ry="42" fill="#b99371"/><ellipse cx="215" cy="460" rx="12" ry="25" fill="#987054"/><ellipse cx="280" cy="225" rx="95" ry="48" fill="#b2a07b"/><ellipse cx="400" cy="230" rx="90" ry="38" fill="#bba784"/><ellipse cx="480" cy="190" rx="55" ry="18" fill="#8f8a60"/><ellipse cx="335" cy="305" rx="35" ry="30" fill="#8e8757"/><ellipse cx="460" cy="280" rx="60" ry="32" fill="#42622c"/><ellipse cx="530" cy="180" rx="60" ry="18" fill="#4a5430"/><ellipse cx="310" cy="150" rx="150" ry="22" fill="#3f4d29"/><ellipse cx="550" cy="115" rx="210" ry="18" fill="#8c9493"/><ellipse cx="350" cy="102" rx="110" ry="12" fill="#737d72"/><ellipse cx="555" cy="480" rx="72" ry="32" fill="#b57b5a"/><ellipse cx="620" cy="520" rx="30" ry="30" fill="#737346"/><ellipse cx="10" cy="225" rx="20" ry="12" fill="#9c8864"/></g>
        <rect x="-60" y="24" width="810" height="230" filter="url(#mott)" opacity=".45"/>
        <rect x="180" y="254" width="570" height="350" filter="url(#mott)" opacity=".3"/>
        <path d="M220 200q20-8 15 10 12 25-3 26-14-10-12-36zM140 208q20-16 50 0l-8 12-40-2z" fill="#07102d"/><path d="M325 245q20 28 65 26" fill="none" stroke="#4d5c36" stroke-width="5"/>
       </g>
       <path d="M70 68h60l-22 16zM240 98q22-25 62-22l-5 10-40 12z" fill="#b8cfda"/>
       <g filter="url(#snow)" fill="#e6ebee"><path d="M250 100L410 65 470 85 600 88 747 100 747 135 640 145 570 165 500 155 460 130 360 115 300 125Z"/></g>
       <path d="M163 268L172 265 205 330 198 338Z" fill="#02052a"/>
      </g>
     </g>
     <path d="M0 674L76 671 136 661 206 656 306 661 316 651 345 657 376 656 400 648 426 648 440 632 456 626 470 628 491 616 476 636 481 664 536 671 586 673 626 661 676 644 726 639 736 637 742 640 826 638 926 626 950 630 1016 636 1024 630 1041 626 1080 628 1100 623 1166 624 1200 622 1256 627 1300 630 1336 636 1408 648 1376 666 1449 676V723H0Z" fill="#fff"/>
    </svg>
   </div>
   <div class="vscroll d-flex flex-column align-items-center">
    <button class="arrowbtn" aria-label="向上"><svg viewBox="0 0 9 9"><path d="M1 6l3.500-3.500L8 6" fill="none" stroke="#444" stroke-width="1.600"/></svg></button>
    <div class="thumb flex-grow-1 w-75"></div>
    <button class="arrowbtn" aria-label="向下"><svg viewBox="0 0 9 9"><path d="M1 3l3.500 3.500L8 3" fill="none" stroke="#444" stroke-width="1.600"/></svg></button>
   </div>
  </div>
  <div class="hscroll d-flex align-items-center">
   <button class="arrowbtn datav" aria-label="数据视图"><svg viewBox="0 0 9 9"><path d="M.5.500h8v8h-8z" fill="#cbd67a" stroke="#345"/><path d="M2 6l4-4" stroke="#486"/></svg></button>
   <button class="arrowbtn" aria-label="布局视图"><svg viewBox="0 0 9 9"><path d="M1 .5h5l2 2v6H1z" fill="#fff" stroke="#456"/><path d="M3 4h3v2H3z" fill="#68a"/></svg></button>
   <span class="sep ms-1"></span>
   <button class="arrowbtn" aria-label="刷新"><svg viewBox="0 0 9 9"><path d="M1 4a3.500 3.500 0 0 1 6-2M8 5a3.500 3.500 0 0 1-6 2" fill="none" stroke="#2c5687" stroke-width="1.300"/><path d="M5.500 3H8.500V0zM3.500 6H.5v3z" fill="#2c5687"/></svg></button>
   <button class="arrowbtn" aria-label="暂停"><svg viewBox="0 0 9 9"><path d="M3 1v7M6.500 1v7" stroke="#2c5687" stroke-width="1.600"/></svg></button>
   <button class="arrowbtn" aria-label="向左"><svg viewBox="0 0 9 9"><path d="M6 1L2.500 4.500 6 8" fill="none" stroke="#444" stroke-width="1.600"/></svg></button>
   <div class="thumb flex-grow-1"></div>
   <button class="arrowbtn me-3" aria-label="向右"><svg viewBox="0 0 9 9"><path d="M3 1l3.500 3.500L3 8" fill="none" stroke="#444" stroke-width="1.600"/></svg></button>
  </div>
 </section>

 <aside class="catalog d-flex flex-column flex-shrink-0">
  <div class="panehead d-flex align-items-center"><span>目录</span>
   <button class="ms-auto" aria-label="固定"><svg class="d-block" width="12" height="12"><use href="#pin"/></svg></button><button class="ms-1" aria-label="关闭"><svg class="d-block" width="12" height="12"><use href="#x"/></svg></button></div>
  <div class="panetools d-flex align-items-center ps-1 bg-white">
   <button class="tb" aria-label="后退"><svg color="#f1cf4c"><use href="#prev"/></svg></button><button class="dd mx-1" aria-label="后退历史"></button><button class="tb" aria-label="前进"><svg color="#ccc"><use href="#next"/></svg></button><button class="tb" aria-label="向上一级"><svg><use href="#up"/></svg></button><button class="tb" aria-label="主目录"><svg><use href="#home"/></svg></button><button class="tb" aria-label="默认数据库"><svg><use href="#hgdb"/></svg></button><span class="sep"></span><button class="tb" aria-label="视图"><svg><use href="#tbl"/></svg></button><button class="dd mx-1" aria-label="视图方式"></button><span class="sep"></span><button class="tb" aria-label="连接文件夹"><svg><use href="#conf"/></svg></button><span class="sep"></span><button class="tb" aria-label="目录树"><svg><use href="#treei"/></svg></button><span class="sep"></span><button class="tb" aria-label="选项"><svg><use href="#opts"/></svg></button>
  </div>
  <div class="locrow d-flex align-items-center">
   <label for="loc" class="flex-shrink-0 pe-4">位置:</label>
   <div class="position-relative flex-grow-1"><select id="loc" class="combo loc w-100 d-block"><option>img</option></select><svg class="ic position-absolute top-0 start-0 ms-1"><use href="#wms"/></svg><svg class="comboarrow"><use href="#down"/></svg></div>
  </div>
  <div class="sunk flex-grow-1 me-1">
   <ul class="tree">
    <li><svg><use href="#plus"/></svg><svg class="ic"><use href="#f1"/></svg>默认工作目录 - Documents\ArcGIS</li>
    <li><svg><use href="#plus"/></svg><svg class="ic"><use href="#f2"/></svg>文件夹连接</li>
    <li><svg><use href="#plus"/></svg><svg class="ic"><use href="#f3"/></svg>工具箱</li>
    <li><svg><use href="#plus"/></svg><svg class="ic"><use href="#f4"/></svg>数据库服务器</li>
    <li><svg><use href="#plus"/></svg><svg class="ic"><use href="#f5"/></svg>数据库连接</li>
    <li><svg><use href="#minus"/></svg><svg class="ic"><use href="#f6"/></svg>GIS 服务器</li>
    <li class="d2"><span class="ic"><svg class="ic" color="#a8d4f5"><use href="#srva"/></svg></span>添加 ArcGIS Server</li>
    <li class="d2"><span class="ic"><svg class="ic" color="#b9dd9c"><use href="#srva"/></svg></span>添加 ArcIMS Server</li>
    <li class="d2"><span class="ic"><svg class="ic" color="#c5cbe8"><use href="#srva"/></svg></span>添加 WCS 服务器</li>
    <li class="d2"><span class="ic"><svg class="ic" color="#f3c2b4"><use href="#srva"/></svg></span>添加 WMS 服务器</li>
    <li class="d2"><span class="ic"><svg class="ic" color="#f3c2b4"><use href="#srva"/></svg></span>添加 WMTS 服务器</li>
    <li class="d2"><span class="ic"><svg class="ic" color="#f3c2b4"><use href="#srvx"/></svg></span>WMTS Collection by xdc on xdc.at</li>
    <li class="d2x"><svg><use href="#minus"/></svg><svg class="ic" color="#f3c2b4"><use href="#srv"/></svg>在线地图服务，在 t0.tianditu.com 上</li>
    <li class="d3 pick"><span class="ic"><svg class="ic"><use href="#wms"/></svg></span>img</li>
    <li><svg><use href="#plus"/></svg><svg class="ic"><use href="#f7"/></svg>我托管的服务</li>
    <li><svg><use href="#plus"/></svg><svg class="ic"><use href="#f7"/></svg>即用型服务</li>
    <li><svg><use href="#plus"/></svg><svg class="ic"><use href="#f8"/></svg>追踪连接</li>
   </ul>
  </div>
  <div class="tabs d-flex">
   <button class="tab act d-flex align-items-center"><svg class="ic"><use href="#cat"/></svg>目录</button><button class="tab d-flex align-items-center text-secondary"><svg class="ic"><use href="#srch"/></svg>搜索</button>
  </div>
 </aside>
</main>
<footer class="status d-flex justify-content-end align-items-center">
 <div class="catalog d-flex justify-content-between align-items-center"><span>143.19&ensp;84.27 十进制度</span><svg width="10" height="10"><path d="M7 1h2M4 4h2M7 4h2M1 7h2M4 7h2M7 7h2" stroke="#b5b5b5" stroke-width="2"/></svg></div>
</footer>

<svg class="marks" viewBox="0 0 1080 930" preserveAspectRatio="none" aria-hidden="true">
 <path d="M713 257L812 344 818 341 831 364 806 355 807 350ZM895 381L491 646 493 650 467 656 482 635 485 640 894 379Z" fill="#fb4f54"/>
</svg>
<div class="note note1">1、展开目录</div>
<div class="note note2">2、将img拖动到地图中完成加载</div>
</div>
<script src="https://cdn.jsdelivr.net/npm/bootstrap@5.3.0/dist/js/bootstrap.bundle.min.js"></script>
</body>
</html>
